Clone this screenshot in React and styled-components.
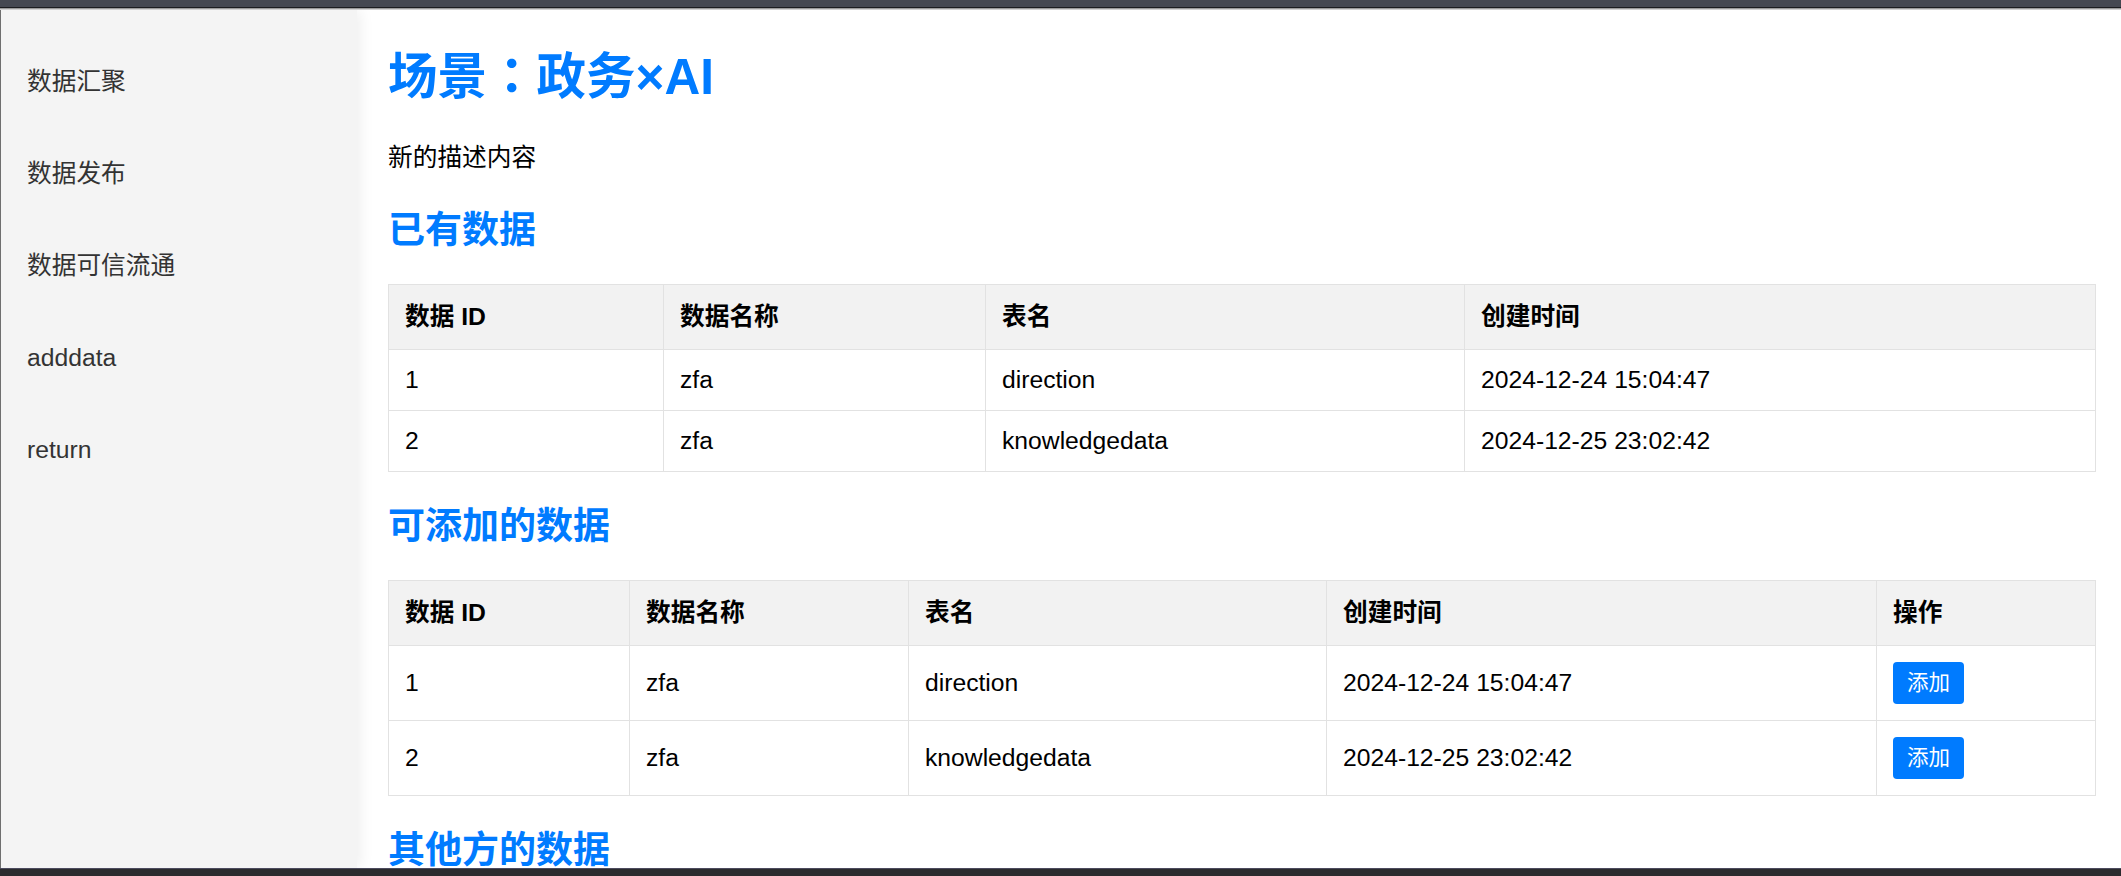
import React from "react";
import styled, { createGlobalStyle } from "styled-components";

const GlobalStyle = createGlobalStyle`
  html, body {
    margin: 0;
    padding: 0;
    background: #ffffff;
    overflow: hidden;
  }
  body {
    font-family: "Liberation Sans", Arial, "Noto Sans CJK SC", sans-serif;
    color: #000;
  }
  * { box-sizing: border-box; }
`;

const Window = styled.div`
  width: 2121px;
  height: 876px;
  display: flex;
  flex-direction: column;
  overflow: hidden;
`;

const TopChrome = styled.div`
  flex: none;
  height: 10px;
  background: linear-gradient(
    to bottom,
    #454851 0,
    #454851 7px,
    #1c1d20 7px,
    #1c1d20 8px,
    #9a9a9a 8px,
    #9a9a9a 9px,
    #d0d0d0 9px
  );
`;

const BottomChrome = styled.div`
  flex: none;
  height: 8px;
  background: #2b2b2e;
  border-top: 1px solid #4c4b5e;
`;

const Shell = styled.div`
  flex: 1;
  min-height: 0;
  display: flex;
  border-left: 1px solid #6f6f6f;
  overflow: hidden;
`;

const Sidebar = styled.nav`
  flex: none;
  width: 356px;
  background: #f4f4f4;
  padding-top: 26px;
  box-shadow: 3px 0 14px rgba(0, 0, 0, 0.07);
  position: relative;
  z-index: 1;
`;

const NavItem = styled.div`
  padding: 30px 26px;
  font-size: 24.7px;
  line-height: 32px;
  color: #333333;
  cursor: pointer;
`;

const Main = styled.main`
  flex: 1;
  min-width: 0;
  padding: 0 25px 0 31px;
  overflow: hidden;
`;

const Title = styled.h1`
  margin: 37px 0 0;
  font-family: "Liberation Sans", Arial, "Noto Sans CJK TC", sans-serif;
  font-size: 49.5px;
  line-height: 60px;
  font-weight: bold;
  color: #007bff;
`;

const Description = styled.p`
  margin: 33px 0 0;
  font-size: 24.7px;
  line-height: 36px;
  color: #000;
`;

const SectionTitle = styled.h2`
  margin: 32px 0 30px;
  font-size: 37px;
  line-height: 46px;
  font-weight: bold;
  color: #007bff;
`;

const Table = styled.table`
  width: 100%;
  border-collapse: collapse;
  font-size: 24.7px;
  margin-bottom: 3px;
`;

const Th = styled.th`
  width: ${(p) => p.$w}px;
  background: #f2f2f2;
  border: 1px solid #e2e2e2;
  padding: 14px 16px;
  line-height: 36px;
  text-align: left;
  font-weight: bold;
  color: #000;
`;

const Td = styled.td`
  border: 1px solid #e2e2e2;
  padding: ${(p) => (p.$action ? "16px" : "12px")} 16px;
  line-height: 36px;
  vertical-align: middle;
  color: #000;
`;

const AddButton = styled.button`
  display: block;
  height: 42px;
  padding: 0 14px;
  border: none;
  border-radius: 4px;
  background: #007bff;
  color: #ffffff;
  font-family: "Liberation Sans", "Noto Sans CJK SC", sans-serif;
  font-size: 21.5px;
  line-height: 42px;
  cursor: pointer;
`;

const navItems = ["数据汇聚", "数据发布", "数据可信流通", "adddata", "return"];

const rows = [
  { id: 1, name: "zfa", table: "direction", time: "2024-12-24 15:04:47" },
  { id: 2, name: "zfa", table: "knowledgedata", time: "2024-12-25 23:02:42" },
];

export default function App() {
  return (
    <>
      <GlobalStyle />
      <Window>
        <TopChrome />
        <Shell>
          <Sidebar>
            {navItems.map((item) => (
              <NavItem key={item}>{item}</NavItem>
            ))}
          </Sidebar>
          <Main>
            <Title>场景：政务×AI</Title>
            <Description>新的描述内容</Description>

            <SectionTitle>已有数据</SectionTitle>
            <Table>
              <thead>
                <tr>
                  <Th $w={275}>数据 ID</Th>
                  <Th $w={322}>数据名称</Th>
                  <Th $w={479}>表名</Th>
                  <Th $w={631}>创建时间</Th>
                </tr>
              </thead>
              <tbody>
                {rows.map((r) => (
                  <tr key={r.id}>
                    <Td>{r.id}</Td>
                    <Td>{r.name}</Td>
                    <Td>{r.table}</Td>
                    <Td>{r.time}</Td>
                  </tr>
                ))}
              </tbody>
            </Table>

            <SectionTitle>可添加的数据</SectionTitle>
            <Table>
              <thead>
                <tr>
                  <Th $w={241}>数据 ID</Th>
                  <Th $w={279}>数据名称</Th>
                  <Th $w={418}>表名</Th>
                  <Th $w={550}>创建时间</Th>
                  <Th $w={219}>操作</Th>
                </tr>
              </thead>
              <tbody>
                {rows.map((r) => (
                  <tr key={r.id}>
                    <Td>{r.id}</Td>
                    <Td>{r.name}</Td>
                    <Td>{r.table}</Td>
                    <Td>{r.time}</Td>
                    <Td $action>
                      <AddButton>添加</AddButton>
                    </Td>
                  </tr>
                ))}
              </tbody>
            </Table>

            <SectionTitle>其他方的数据</SectionTitle>
          </Main>
        </Shell>
        <BottomChrome />
      </Window>
    </>
  );
}
